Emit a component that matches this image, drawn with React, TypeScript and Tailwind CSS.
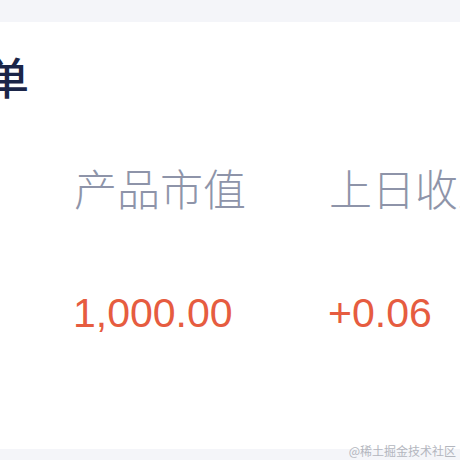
const cjk = "font-['Noto_Sans_CJK_SC',sans-serif]";
const num = "font-['Liberation_Sans','Noto_Sans_CJK_SC',sans-serif]";

const columns = [
  { label: '产品市值', value: '1,000.00' },
  { label: '上日收益', value: '+0.06' },
];

export default function App() {
  return (
    <div className="relative w-[460px] h-[460px] overflow-hidden bg-[#f4f5f9]">
      <div className="mt-[22px] h-[427px] bg-white overflow-hidden">
        {/* 标题（左侧被裁切） */}
        <div className={`${cjk} -ml-[59px] pt-[22px] text-[44px] leading-[64px] font-medium text-[#1b2548] whitespace-nowrap`}>
          清单
        </div>

        {/* 表头 */}
        <div className="flex pl-[74px] mt-[49px] whitespace-nowrap">
          {columns.map((c) => (
            <div key={c.label} className={`${cjk} w-[255px] shrink-0 text-[43px] leading-[60px] font-light text-[#8e94a9]`}>
              {c.label}
            </div>
          ))}
        </div>

        {/* 数值 */}
        <div className="flex pl-[73px] mt-[72px] whitespace-nowrap">
          {columns.map((c) => (
            <div key={c.label} className={`${num} w-[255px] shrink-0 text-[41px] leading-[48px] text-[#e65c40]`}>
              {c.value}
            </div>
          ))}
        </div>
      </div>

      <div className={`${cjk} absolute right-[4px] bottom-[1px] text-[12px] leading-[16px] text-[#b3b6be]`}>
        @稀土掘金技术社区
      </div>
    </div>
  );
}
